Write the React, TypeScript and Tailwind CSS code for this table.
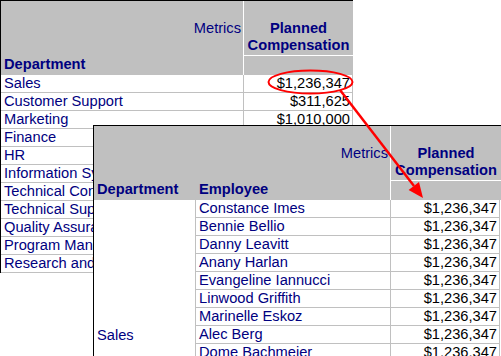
import React from "react";

const backRows: [string, string][] = [
  ["Sales", "$1,236,347"],
  ["Customer Support", "$311,625"],
  ["Marketing", "$1,010,000"],
  ["Finance", "$842,310"],
  ["HR", "$415,200"],
  ["Information Systems", "$967,450"],
  ["Technical Consulting", "$1,120,880"],
  ["Technical Support", "$588,140"],
  ["Quality Assurance", "$702,915"],
  ["Program Management", "$655,300"],
  ["Research and Development", "$1,340,125"],
];

const employees = [
  "Constance Imes",
  "Bennie Bellio",
  "Danny Leavitt",
  "Anany Harlan",
  "Evangeline Iannucci",
  "Linwood Griffith",
  "Marinelle Eskoz",
  "Alec Berg",
  "Dome Bachmeier",
  "Harold Kemp",
  "Janet Morrow",
  "Lucas Ferreira",
  "Nina Castell",
  "Oscar Whitley",
  "Paula Renner",
];

function HeaderRight() {
  return (
    <div className="flex flex-col w-[109px]">
      <div className="h-[54px] flex flex-col justify-end items-center pb-px font-bold text-[#000080] leading-[17px] whitespace-nowrap">
        <div>Planned</div>
        <div>Compensation</div>
      </div>
      <div className="h-px bg-white" />
      <div className="h-[19px]" />
    </div>
  );
}

export default function App() {
  return (
    <div className="relative w-[501px] h-[356px] overflow-hidden bg-white font-['Liberation_Sans',Arial,sans-serif] text-[14.67px] leading-[17px]">
      {/* Back table */}
      <div className="w-[353px] border-l border-t border-black">
        <div className="flex h-[74px] bg-[#c0c0c0] w-[352px]">
          <div className="w-[242px] flex flex-col">
            <div className="h-[55px] flex items-center justify-end pr-[2px] text-[#000080]">
              Metrics
            </div>
            <div className="h-[19px] pl-[3px] font-bold text-[#000080]">Department</div>
          </div>
          <div className="w-px bg-white" />
          <HeaderRight />
        </div>
        {backRows.map(([name, value]) => (
          <div key={name} className="flex h-[18px] w-[352px] border-b border-r border-[#c0c0c0]">
            <div className="w-[243px] border-r border-[#c0c0c0] pl-[3px] text-[#000080] whitespace-nowrap overflow-hidden">
              {name}
            </div>
            <div className="w-[108px] pr-[2px] text-right text-black">{value}</div>
          </div>
        ))}
      </div>

      {/* Front table (overlapping window) */}
      <div className="absolute left-[93px] top-[125px] w-[430px] border-l border-t border-black bg-white">
        <div className="flex h-[74px] bg-[#c0c0c0]">
          <div className="w-[296px] flex flex-col">
            <div className="h-[55px] flex items-center justify-end pr-[2px] text-[#000080]">
              Metrics
            </div>
            <div className="h-[19px] flex font-bold text-[#000080]">
              <div className="w-[102px] pl-[3px]">Department</div>
              <div className="pl-[3px]">Employee</div>
            </div>
          </div>
          <div className="w-px bg-white" />
          <div className="w-[110px]">
            <div className="flex flex-col w-[110px]">
              <div className="h-[54px] flex flex-col justify-end items-center pb-px font-bold text-[#000080] whitespace-nowrap">
                <div>Planned</div>
                <div>Compensation</div>
              </div>
              <div className="h-px bg-white" />
              <div className="h-[19px]" />
            </div>
          </div>
        </div>
        <div className="flex">
          <div className="w-[102px] h-[270px] border-r border-[#c0c0c0] flex items-center pl-[3px] text-[#000080]">
            Sales
          </div>
          <div className="flex flex-col">
            {employees.map((e) => (
              <div key={e} className="flex h-[18px]">
                <div className="w-[195px] border-r border-b border-[#c0c0c0] pl-[3px] text-[#000080] whitespace-nowrap">
                  {e}
                </div>
                <div className="w-[109px] border-r border-b border-[#c0c0c0] pr-[2px] text-right text-black">
                  $1,236,347
                </div>
              </div>
            ))}
          </div>
        </div>
      </div>

      {/* Annotation */}
      <svg
        className="absolute left-0 top-0 pointer-events-none"
        width="501"
        height="356"
        viewBox="0 0 501 356"
      >
        <ellipse cx="310.5" cy="82" rx="42" ry="11.5" fill="none" stroke="#ff0000" strokeWidth="2" />
        <line x1="340" y1="90" x2="414" y2="186" stroke="#ff0000" strokeWidth="2.5" />
        <polygon points="423,198 408.6,190 419,182" fill="#ff0000" />
      </svg>
    </div>
  );
}
